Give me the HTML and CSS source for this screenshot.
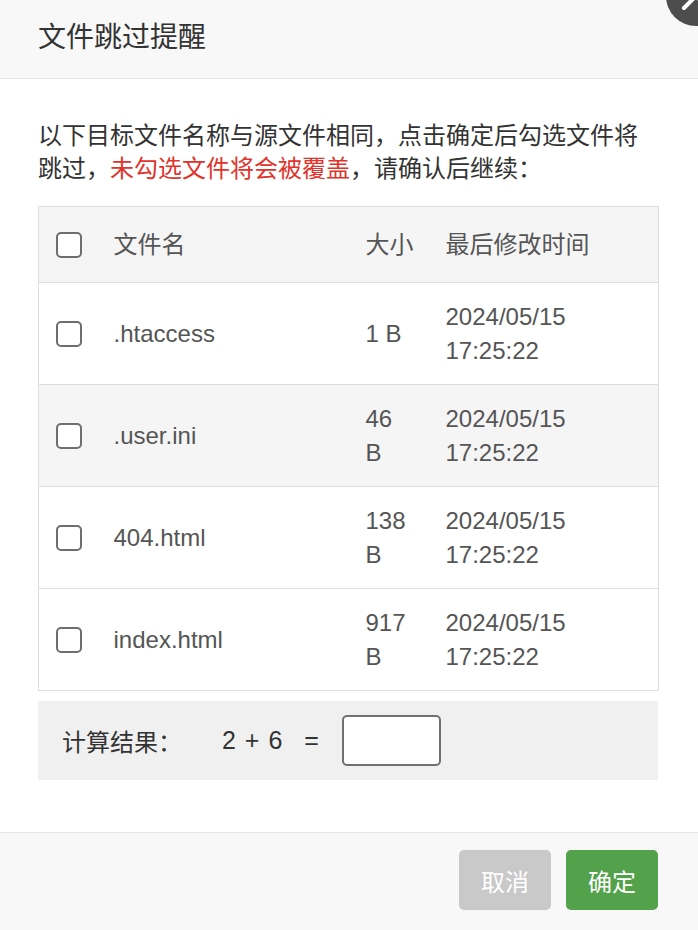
FILE: index.html
```html
<!DOCTYPE html>
<html lang="zh-CN">
<head>
  <meta charset="UTF-8" />
  <meta name="viewport" content="width=device-width, initial-scale=1.0"/>
  <title>文件跳过提醒</title>
  <link rel="stylesheet" href="styles.css">
</head>
<body>

  <div class="dialog" role="dialog" aria-label="文件跳过提醒">
    <!-- Header -->
    <div class="dialog-title">文件跳过提醒</div>
    <a class="close-btn" href="#" aria-label="关闭">
      <svg width="60" height="60" viewBox="0 0 60 60">
        <circle cx="30" cy="30" r="30" fill="#4d4d4d" />
        <path d="M18 18 L42 42 M42 18 L18 42" stroke="#fff" stroke-width="4" stroke-linecap="round" />
      </svg>
    </a>

    <!-- Content -->
    <div class="dialog-body">
      <p class="tip">以下目标文件名称与源文件相同，点击确定后勾选文件将跳过，<span class="warn">未勾选文件将会被覆盖</span>，请确认后继续：</p>

      <table class="file-table">
        <colgroup>
          <col class="col-check" />
          <col class="col-name" />
          <col class="col-size" />
          <col class="col-time" />
        </colgroup>
        <thead>
          <tr>
            <th><span class="checkbox"></span></th>
            <th>文件名</th>
            <th>大小</th>
            <th>最后修改时间</th>
          </tr>
        </thead>
        <tbody>
          <tr>
            <td><span class="checkbox"></span></td>
            <td>.htaccess</td>
            <td>1 B</td>
            <td>2024/05/15 17:25:22</td>
          </tr>
          <tr class="hover">
            <td><span class="checkbox"></span></td>
            <td>.user.ini</td>
            <td>46 B</td>
            <td>2024/05/15 17:25:22</td>
          </tr>
          <tr>
            <td><span class="checkbox"></span></td>
            <td>404.html</td>
            <td>138 B</td>
            <td>2024/05/15 17:25:22</td>
          </tr>
          <tr>
            <td><span class="checkbox"></span></td>
            <td>index.html</td>
            <td>917 B</td>
            <td>2024/05/15 17:25:22</td>
          </tr>
        </tbody>
      </table>

      <div class="captcha">
        <span class="captcha-label">计算结果：</span>
        <span class="captcha-expr">2 + 6</span>
        <span class="captcha-eq">=</span>
        <input type="text" class="captcha-input" />
      </div>
    </div>

    <!-- Footer -->
    <div class="dialog-footer">
      <button class="btn btn-cancel">取消</button>
      <button class="btn btn-ok">确定</button>
    </div>
  </div>

</body>
</html>
```

FILE: styles.css
```css
:root {
  --title-bg: #f8f8f8;
  --line: #e6e6e6;
  --table-line: #dddddd;
  --text: #333;
  --cell-text: #555;
  --red: #e0332b;
  --green: #53a14b;
  --grey-btn: #c9c9c9;
}

* {
  box-sizing: border-box;
}

body {
  margin: 0;
  font-family: 'Liberation Sans', 'Noto Sans CJK SC', sans-serif;
  color: var(--text);
  background: #fff;
}

.dialog {
  position: relative;
  width: 698px;
  height: 930px;
  display: flex;
  flex-direction: column;
  overflow: hidden;
}

.dialog-title {
  height: 79px;
  padding: 0 38px;
  line-height: 76px;
  font-size: 28px;
  color: var(--text);
  background: var(--title-bg);
  border-bottom: 1px solid var(--line);
}

.close-btn {
  position: absolute;
  top: -34px;
  right: -28px;
}

.close-btn svg {
  display: block;
}

.dialog-body {
  flex: 1;
  padding: 40px 40px 0 38px;
}

.tip {
  margin: 0 0 21px;
  font-size: 24px;
  line-height: 33px;
  color: var(--text);
}

.warn {
  color: var(--red);
}

.file-table {
  width: 620px;
  table-layout: fixed;
  border-collapse: collapse;
  border: 1px solid var(--table-line);
  font-size: 24px;
  color: var(--cell-text);
}

.col-check { width: 60px; }
.col-name { width: 251px; }
.col-size { width: 80px; }
.col-time { width: 229px; }

.file-table th,
.file-table td {
  padding: 16px 16px;
  line-height: 34px;
  text-align: left;
  font-weight: normal;
  border-bottom: 1px solid var(--table-line);
  vertical-align: middle;
}

.file-table th {
  height: 76px;
  background: #f5f5f5;
}

.file-table th:first-child,
.file-table td:first-child {
  padding-left: 17px;
  padding-right: 0;
}

.file-table th:nth-child(2),
.file-table td:nth-child(2) {
  padding-left: 15px;
}

.file-table td {
  height: 102px;
}

.file-table tr.hover td {
  background: #f5f5f5;
}

.checkbox {
  display: block;
  width: 26px;
  height: 26px;
  border: 2px solid #6e6e6e;
  border-radius: 5px;
  background: #fff;
}

.captcha {
  margin-top: 10px;
  width: 620px;
  height: 79px;
  padding: 0 24px;
  display: flex;
  align-items: center;
  background: #f0f0f0;
  font-size: 24px;
  color: var(--text);
}

.captcha-expr {
  margin-left: 40px;
  font-size: 25px;
  word-spacing: 2px;
}

.captcha-eq {
  margin-left: 22px;
  font-size: 25px;
}

.captcha-input {
  margin-left: 23px;
  width: 99px;
  height: 51px;
  border: 2px solid #707070;
  border-radius: 5px;
  background: #fff;
}

.dialog-footer {
  height: 98px;
  padding: 17px 40px 0 0;
  display: flex;
  justify-content: flex-end;
  align-items: flex-start;
  gap: 15px;
  background: var(--title-bg);
  border-top: 1px solid var(--line);
}

.btn {
  width: 92px;
  height: 60px;
  border: none;
  border-radius: 5px;
  color: #fff;
  font-family: 'Liberation Sans', 'Noto Sans CJK SC', sans-serif;
  font-size: 24px;
  cursor: pointer;
}

.btn-cancel {
  background: var(--grey-btn);
}

.btn-ok {
  background: var(--green);
}
```
